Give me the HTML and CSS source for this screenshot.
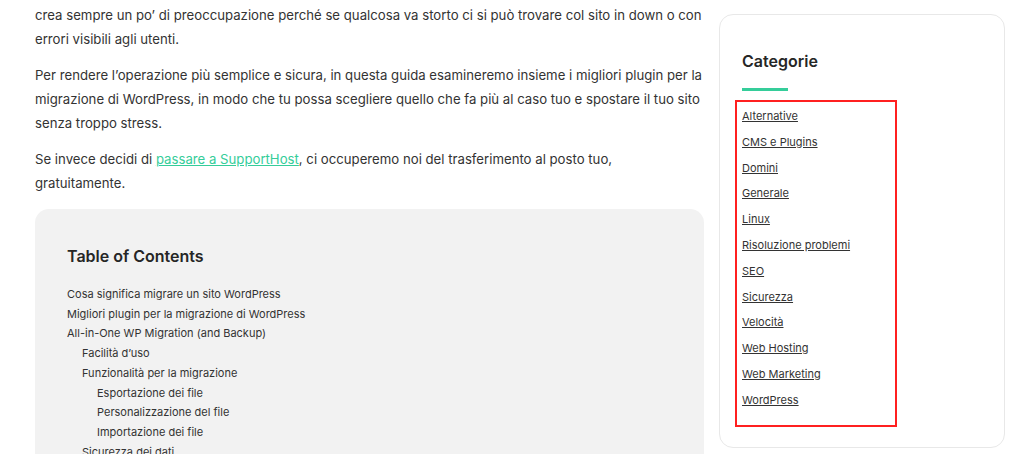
FILE: index.html
```html
<!DOCTYPE html>
<html lang="it">
<head>
<meta charset="utf-8">
<title>Migrazione WordPress</title>
<link rel="stylesheet" href="styles.css">
</head>
<body>
<div class="page">
  <main class="content">
    <p>crea sempre un po’ di preoccupazione perché se qualcosa va storto ci si può trovare col sito in down o con errori visibili agli utenti.</p>
    <p>Per rendere l’operazione più semplice e sicura, in questa guida esamineremo insieme i migliori plugin per la migrazione di WordPress, in modo che tu possa scegliere quello che fa più al caso tuo e spostare il tuo sito senza troppo stress.</p>
    <p>Se invece decidi di <a href="#" class="green">passare a SupportHost</a>, ci occuperemo noi del trasferimento al posto tuo, gratuitamente.</p>
    <nav class="toc">
      <h2 class="toc-title">Table of Contents</h2>
      <ul class="toc-list">
        <li>Cosa significa migrare un sito WordPress</li>
        <li>Migliori plugin per la migrazione di WordPress</li>
        <li>All-in-One WP Migration (and Backup)
          <ul>
            <li>Facilità d’uso</li>
            <li>Funzionalità per la migrazione
              <ul>
                <li>Esportazione dei file</li>
                <li>Personalizzazione del file</li>
                <li>Importazione dei file</li>
              </ul>
            </li>
            <li>Sicurezza dei dati</li>
          </ul>
        </li>
      </ul>
    </nav>
  </main>
  <aside class="sidebar">
    <div class="card">
      <h3 class="card-title">Categorie</h3>
      <div class="bar"></div>
      <ul class="cats">
        <li><a href="#">Alternative</a></li>
        <li><a href="#">CMS e Plugins</a></li>
        <li><a href="#">Domini</a></li>
        <li><a href="#">Generale</a></li>
        <li><a href="#">Linux</a></li>
        <li><a href="#">Risoluzione problemi</a></li>
        <li><a href="#">SEO</a></li>
        <li><a href="#">Sicurezza</a></li>
        <li><a href="#">Velocità</a></li>
        <li><a href="#">Web Hosting</a></li>
        <li><a href="#">Web Marketing</a></li>
        <li><a href="#">WordPress</a></li>
      </ul>
    </div>
  </aside>
</div>
</body>
</html>
```
FILE: styles.css
```css
html, body {
  margin: 0;
  padding: 0;
  background: #fff;
  overflow: hidden;
}
body {
  font-family: Inter, "Noto Sans", sans-serif;
  color: #333;
}
.page {
  display: flex;
  gap: 15px;
  padding-left: 35px;
  align-items: flex-start;
}
.content {
  width: 669px;
  flex: none;
  padding-top: 3px;
}
.content p {
  margin: 0 0 12px;
  font-size: 13.2px;
  line-height: 24px;
}
.green {
  color: #35cd9a;
}
.toc {
  background: #f2f2f2;
  border-radius: 14px;
  padding: 35px 32px 20px;
  margin-top: 14px;
}
.toc-title {
  margin: 0 0 17px;
  font-size: 16px;
  font-weight: 600;
  line-height: 24px;
  color: #262626;
}
.toc-list, .toc-list ul {
  list-style: none;
  margin: 0;
  padding: 0;
}
.toc-list ul {
  padding-left: 15px;
}
.toc-list li {
  font-size: 11px;
  line-height: 19.7px;
}
.sidebar {
  width: 286px;
  flex: none;
  padding-top: 14px;
}
.card {
  border: 1px solid #e8e8e8;
  border-radius: 14px;
  padding: 35px 22px 20px 22px;
}
.card-title {
  margin: 0;
  font-size: 16px;
  font-weight: 600;
  line-height: 22px;
  color: #262626;
}
.bar {
  width: 46px;
  height: 3px;
  background: #35cd9a;
  margin-top: 16px;
}
.cats {
  list-style: none;
  margin: 9px 0 0 -7px;
  padding: 2px 7px 11px 5px;
  width: 146px;
  border: 2px solid #ff2020;
}
.cats li {
  font-size: 11px;
  line-height: 25.8px;
}
.cats a {
  color: #333;
}
```
